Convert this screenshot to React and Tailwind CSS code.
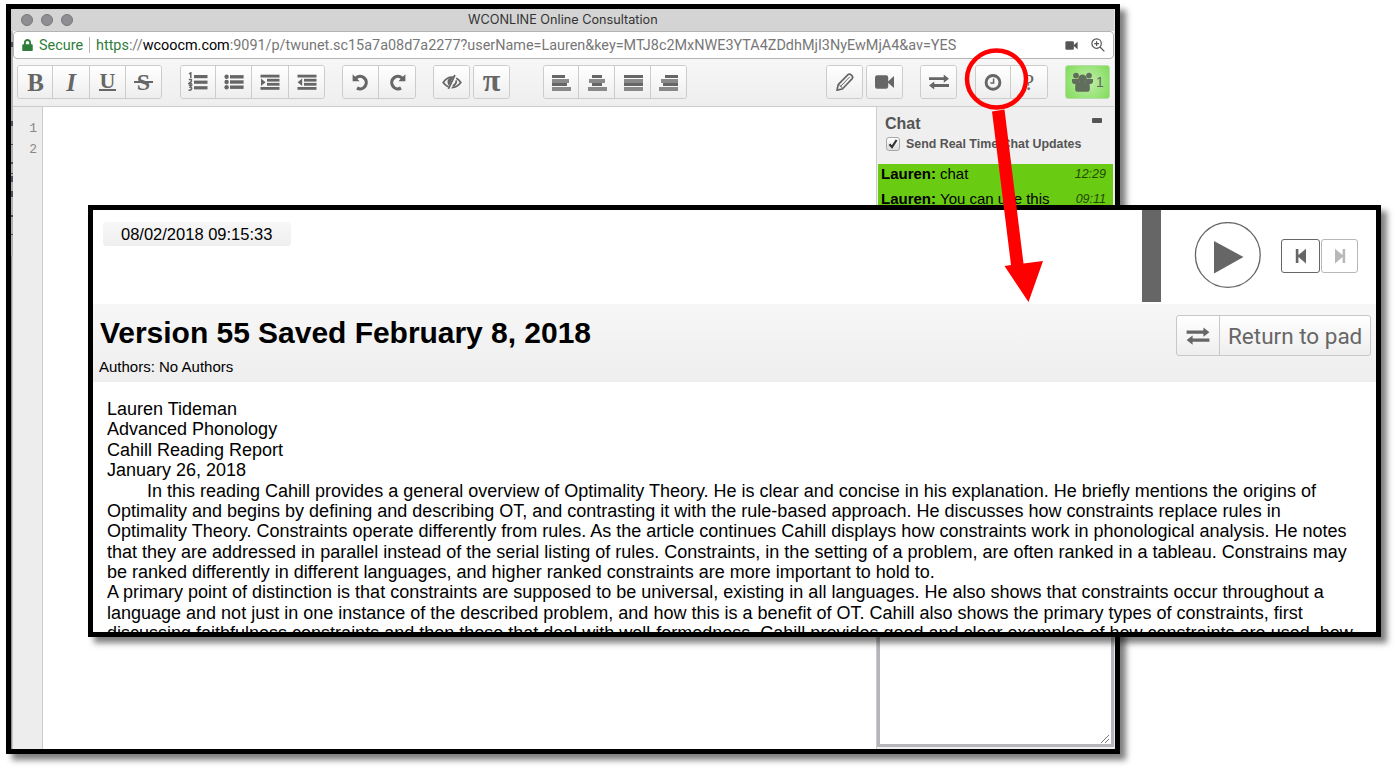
import React from "react";
import { FaLock } from "react-icons/fa";

const BTN = "flex items-center justify-center h-full bg-gradient-to-b from-white to-[#eeeeee] text-[#666666]";
const GLYPH = "font-['Liberation_Serif',serif] text-[25px] leading-none font-bold";
const GROUP = "flex h-[34px] shrink-0 overflow-hidden rounded-[3px] border border-[#cccccc] divide-x divide-[#cccccc]";

function Bars({ rows }) {
  return (
    <svg width="20" height="18" viewBox="0 0 20 18" fill="currentColor" shapeRendering="crispEdges">
      {rows.map(([x, w], i) => (
        <rect key={i} x={x} y={2 + i * 4} width={w} height={i % 2 ? 4 : 3} opacity={i % 2 ? 0.75 : 1} />
      ))}
    </svg>
  );
}

function ListOl() {
  return (
    <svg width="20" height="20" viewBox="0 0 20 20" fill="currentColor">
      <rect x="6" y="3" width="13.5" height="3.2" />
      <rect x="6" y="8.6" width="13.5" height="3.2" />
      <rect x="6" y="14.2" width="13.5" height="3.2" />
      <path d="M1 2l1.8-1.2V6M.8 7.6h2.6v1.6L1 11.4h3M.8 13.2h2.8L2.2 15c2.4 0 1.8 3.8-1.6 3" fill="none" stroke="currentColor" strokeWidth="1.5" />
    </svg>
  );
}

function ListUl() {
  return (
    <svg width="20" height="16" viewBox="0 0 20 16" fill="currentColor">
      {[2.8, 8, 13.2].map((y) => (
        <g key={y}>
          <circle cx="2.6" cy={y} r="2.2" />
          <rect x="6" y={y - 1.7} width="13.6" height="3.4" />
        </g>
      ))}
    </svg>
  );
}

function Indent({ out }) {
  return (
    <svg width="20" height="16" viewBox="0 0 20 16" fill="currentColor">
      <rect x="0.5" y="0.7" width="19" height="2.8" />
      <rect x="7" y="4.8" width="12.5" height="2.8" />
      <rect x="7" y="8.9" width="12.5" height="2.8" />
      <rect x="0.5" y="13" width="19" height="2.8" />
      {out ? <path d="M5.2 4.4v7.6L0.6 8.2z" /> : <path d="M1 4.4v7.6L5.6 8.2z" />}
    </svg>
  );
}

function Rotate({ flip }) {
  return (
    <svg width="18" height="18" viewBox="0 0 18 18" className={flip ? "-scale-x-100" : ""}>
      <path d="M3.6 5.3A6.2 6.2 0 1 1 5 15" fill="none" stroke="currentColor" strokeWidth="3.2" />
      <path d="M.6 1.2v7h7z" fill="currentColor" />
    </svg>
  );
}

function EyeSlash() {
  return (
    <svg width="20" height="16" viewBox="0 0 20 16" fill="none" stroke="currentColor">
      <path d="M1.2 8.5C3.6 5 6.6 3.2 10 3.2s6.4 1.8 8.8 5.3c-2.4 3.2-5.4 5-8.8 5s-6.4-1.8-8.8-5z" strokeWidth="1.8" />
      <path d="M10.8 3.8C7 3.4 5 6 5.6 9c.3 1.5 1.2 2.6 2.2 3.2z" fill="currentColor" stroke="none" />
      <path d="M13.8 1.2L7 15.2" stroke="#f7f7f7" strokeWidth="3.2" />
      <path d="M12.9 1L6.4 14.8M14.2 6.4c.4 2.4-1 4.4-3.4 5.4" strokeWidth="1.8" />
    </svg>
  );
}

function Exchange({ w = 20, h = 16 }) {
  return (
    <svg width={w} height={h} viewBox="0 0 19 15" fill="currentColor">
      <path d="M0 2.9h14V.4l5 3.9-5 3.8V5.7H0z" />
      <path d="M19 9.5H5V7l-5 3.9 5 3.8v-2.4h14z" />
    </svg>
  );
}

function Pencil() {
  return (
    <svg width="20" height="20" viewBox="0 0 20 20" fill="none" stroke="currentColor">
      <path d="M2 18.200l1.200-5.600L13 2.600c1.800-1.600 6 1.600 4.200 4L7.400 17z" strokeWidth="1.7" strokeLinejoin="round" />
      <path d="M5.400 14.600L14.800 4.800M3.200 12.800c1.800.2 3.600 1.800 4 3.800" strokeWidth="1" />
    </svg>
  );
}

function Camera({ w = 19, h = 14 }) {
  return (
    <svg width={w} height={h} viewBox="0 0 19 14" fill="currentColor">
      <rect x="0" y="0.2" width="13.2" height="13.6" rx="2.2" />
      <path d="M13 6.4L19 1v12L13 7.800z" />
    </svg>
  );
}

function Clock() {
  return (
    <svg width="18" height="18" viewBox="0 0 18 18" fill="none" stroke="currentColor">
      <circle cx="9" cy="9.4" r="6.900" strokeWidth="2.900" />
      <path d="M9.600 5.600v4.400H6.400" strokeWidth="1.500" />
    </svg>
  );
}

function Users() {
  return (
    <svg width="21" height="20" viewBox="0 0 21 20" fill="#626e5c">
      <circle cx="4" cy="3.600" r="2.900" />
      <circle cx="17" cy="3.600" r="2.900" />
      <path d="M0 7h7v5H2.400C1 12 0 11 0 9.600zM21 7h-7v5h4.600c1.400 0 2.400-1 2.400-2.400z" />
      <circle cx="10.500" cy="6.600" r="4.200" />
      <path d="M3.200 14c0-2.600 1.600-4.400 3.800-4.400h7c2.200 0 3.800 1.800 3.800 4.400v3.200c0 1.600-1 2.600-2.600 2.600H5.800c-1.600 0-2.600-1-2.600-2.600z" />
    </svg>
  );
}

function TitleBar() {
  return (
    <div className="flex h-[22px] shrink-0 items-center bg-[#d4d4d4] pl-2">
      <div className="flex gap-2">
        <span className="size-3 rounded-full border border-[#77777b] bg-[#8e8e93]" />
        <span className="size-3 rounded-full border border-[#77777b] bg-[#8e8e93]" />
        <span className="size-3 rounded-full border border-[#77777b] bg-[#8e8e93]" />
      </div>
      <span className="ml-[395px] pt-px whitespace-nowrap font-['Inter',sans-serif] text-[12.7px] leading-none text-[#333333]">WCONLINE Online Consultation</span>
    </div>
  );
}

function AddressBar() {
  return (
    <div className="flex h-7 shrink-0 items-center rounded-sm border border-[#b4b4b4] bg-white pr-2 pl-2 font-['Roboto',sans-serif] text-[14.4px] leading-none whitespace-nowrap">
      <FaLock className="h-3 w-[11px] text-[#2e7d3a]" />
      <span className="ml-[6px] pt-[2px] text-[#2e7d3a]">Secure</span>
      <span className="mr-[6px] ml-[6px] h-4 w-px bg-[#b8b8b8]" />
      <span className="pt-[2px] text-[#777777]">
        <span className="text-[#2e7d3a]">https</span>://<span className="text-black">wcoocm.com</span>:9091/p/twunet.sc15a7a08d7a2277?userName=Lauren&amp;key=MTJ8c2MxNWE3YTA4ZDdhMjI3NyEwMjA4&amp;av=YES
      </span>
      <div className="ml-auto flex items-center gap-[13px] text-[#555555]">
        <Camera w={13} h={9} />
        <svg width="14" height="14" viewBox="0 0 14 14" fill="none" stroke="currentColor" strokeWidth="1.2">
          <circle cx="5.6" cy="5.6" r="4.7" />
          <path d="M9 9l4.4 4.4M3.2 5.6H8M5.6 3.2V8" />
        </svg>
      </div>
    </div>
  );
}

function Toolbar() {
  return (
    <div className="flex h-[48px] shrink-0 items-start border-b border-[#cccccc] bg-gradient-to-b from-[#f7f7f7] to-[#eeeeee] pt-[6px] pl-1">
      <div className={GROUP}>
        <div className={`${BTN} ${GLYPH} w-[35px] pl-px`}>B</div>
        <div className={`${BTN} ${GLYPH} w-[37px] italic`}>I</div>
        <div className={`${BTN} w-[36px]`}>
          <span className="flex flex-col items-center font-['Liberation_Serif',serif] text-[22px] leading-[16px] font-bold">
            U
            <span className="h-[2px] w-[17px] bg-[#666666]" />
          </span>
        </div>
        <div className={`${BTN} relative w-[35px]`}>
          <span className="font-['Liberation_Serif',serif] text-[24px] leading-none font-bold">S</span>
          <span className="absolute h-[2px] w-[19px] bg-[#666666]" />
        </div>
      </div>
      <div className={`${GROUP} ml-[18px]`}>
        <div className={`${BTN} w-[35px]`}><ListOl /></div>
        <div className={`${BTN} w-[36px]`}><ListUl /></div>
        <div className={`${BTN} w-[37px]`}><Indent /></div>
        <div className={`${BTN} w-[35px]`}><Indent out /></div>
      </div>
      <div className={`${GROUP} ml-[17px]`}>
        <div className={`${BTN} w-[36px]`}><Rotate /></div>
        <div className={`${BTN} w-[36px]`}><Rotate flip /></div>
      </div>
      <div className={`${GROUP} ml-[17px]`}>
        <div className={`${BTN} w-[35px]`}><EyeSlash /></div>
      </div>
      <div className={`${GROUP} ml-[3px]`}>
        <div className={`${BTN} w-[35px] pb-1 font-['Liberation_Serif',serif] text-[32px] leading-none font-bold`}>π</div>
      </div>
      <div className={`${GROUP} ml-[33px]`}>
        <div className={`${BTN} w-[35px]`}><Bars rows={[[1, 13], [1, 17], [1, 15], [1, 19]]} /></div>
        <div className={`${BTN} w-[36px]`}><Bars rows={[[5, 10], [2, 16], [5, 10], [1, 19]]} /></div>
        <div className={`${BTN} w-[36px]`}><Bars rows={[[1, 19], [1, 19], [1, 19], [1, 19]]} /></div>
        <div className={`${BTN} w-[35px]`}><Bars rows={[[6, 13], [2, 17], [4, 15], [0, 19]]} /></div>
      </div>
      <div className={`${GROUP} ml-[139px]`}>
        <div className={`${BTN} w-[35px]`}><Pencil /></div>
      </div>
      <div className={`${GROUP} ml-[3px]`}>
        <div className={`${BTN} w-[35px]`}><Camera /></div>
      </div>
      <div className={`${GROUP} ml-[17px]`}>
        <div className={`${BTN} w-[35px]`}><Exchange /></div>
      </div>
      <div className={`${GROUP} ml-[18px]`}>
        <div className={`${BTN} w-[35px]`}><Clock /></div>
        <div className={`${BTN} w-[36px] font-['Liberation_Serif',serif] text-[23px] leading-none`}>?</div>
      </div>
      <div className="ml-[17px] flex h-[34px] w-[45px] shrink-0 items-center gap-[3px] rounded-[3px] border border-[#b9dba9] bg-[radial-gradient(circle,#b6eb9d_20%,#7fdc58_100%)] pl-[6px] font-['Liberation_Sans',sans-serif] text-sm leading-none text-[#666666]">
        <Users />
        <span>1</span>
      </div>
    </div>
  );
}

function ChatMessage({ text, time }) {
  return (
    <div className="flex h-[25px] items-start pt-[2px] pr-[7px] pl-[3px] text-[15px] leading-4 text-black">
      <b>Lauren:</b>
      <span className="ml-1">{text}</span>
      <i className="ml-auto text-[12.5px] text-[#234a00]">{time}</i>
    </div>
  );
}

function Chat() {
  return (
    <div className="flex w-[238px] shrink-0 flex-col border-l border-[#cccccc] bg-[#efefef] font-['Liberation_Sans',sans-serif] text-[#555555]">
      <div className="flex h-[57px] shrink-0 flex-col pt-2 pl-2">
        <div className="flex justify-between pr-3">
          <span className="text-base leading-[18px] font-bold">Chat</span>
          <span className="mt-[3px] h-[5px] w-[10px] rounded-[1px] bg-[#555555]" />
        </div>
        <div className="mt-[3px] flex items-center pl-px">
          <span className="flex size-[14px] items-center justify-center rounded-[3px] border border-[#a9a9a9] bg-gradient-to-b from-white to-[#dddddd]">
            <svg width="10" height="10" viewBox="0 0 10 10" fill="none" stroke="#333333" strokeWidth="2.2"><path d="M1.4 5.2L4 8l4.6-7" /></svg>
          </span>
          <span className="ml-[6px] pt-px text-[12.4px] leading-[15px] font-bold whitespace-nowrap">Send Real Time Chat Updates</span>
        </div>
      </div>
      <div className="mr-px ml-px flex h-[270px] shrink-0 flex-col overflow-hidden bg-[#6acb13]">
        <ChatMessage text="chat" time="12:29" />
        <ChatMessage text="You can use this" time="09:11" />
      </div>
      <div className="relative mb-[2px] flex-1 border-x-[3px] border-b-[3px] border-[#b5b5bb] bg-white">
        <svg className="absolute right-[2px] bottom-px" width="8" height="8" viewBox="0 0 8 8" stroke="#777777"><path d="M0 8l8-8M4 8l4-4" /></svg>
      </div>
    </div>
  );
}

function EdgeStrip() {
  return (
    <svg className="shrink-0" width="2" height="740" viewBox="0 0 2 740" shapeRendering="crispEdges">
      <rect width="2" height="22" fill="#d0d0d0" />
      <rect y="22" width="2" height="225" fill="#b0b0b0" />
      <rect y="247" width="2" height="493" fill="#8f8f93" />
      {[[33, 5], [112, 5], [135, 1], [153, 2], [164, 1], [167, 6], [182, 6], [206, 2], [225, 1]].map(([y, h]) => (
        <rect key={y} x="0" y={y} width="2" height={h} fill="#2a2a3a" opacity="0.7" />
      ))}
      <rect x="1" y="247" width="1" height="493" fill="#c8c8c8" />
    </svg>
  );
}

function PadWindow() {
  return (
    <div className="ml-[6px] flex h-[750px] w-[1114px] border-[5px] border-black bg-[#e6e6e6] shadow-[6px_6px_6px_rgba(0,0,0,0.5)]">
      <EdgeStrip />
      <div className="mr-px flex min-w-0 flex-1 flex-col bg-white">
        <TitleBar />
        <AddressBar />
        <Toolbar />
        <div className="flex min-h-0 flex-1">
          <div className="flex w-[30px] shrink-0 flex-col items-end border-r border-[#cccccc] bg-[#ededed] pt-[11px] pr-[5px] font-['Liberation_Mono',monospace] text-[13px] leading-[21px] text-[#888888]">
            <span>1</span>
            <span>2</span>
          </div>
          <div className="flex-1" />
          <Chat />
        </div>
      </div>
    </div>
  );
}

const LINES = [
  "Lauren Tideman",
  "Advanced Phonology",
  "Cahill Reading Report",
  "January 26, 2018",
  "In this reading Cahill provides a general overview of Optimality Theory. He is clear and concise in his explanation. He briefly mentions the origins of",
  "Optimality and begins by defining and describing OT, and contrasting it with the rule-based approach. He discusses how constraints replace rules in",
  "Optimality Theory. Constraints operate differently from rules. As the article continues Cahill displays how constraints work in phonological analysis. He notes",
  "that they are addressed in parallel instead of the serial listing of rules. Constraints, in the setting of a problem, are often ranked in a tableau. Constrains may",
  "be ranked differently in different languages, and higher ranked constraints are more important to hold to.",
  "A primary point of distinction is that constraints are supposed to be universal, existing in all languages. He also shows that constraints occur throughout a",
  "language and not just in one instance of the described problem, and how this is a benefit of OT. Cahill also shows the primary types of constraints, first",
  "discussing faithfulness constraints and then those that deal with well-formedness. Cahill provides good and clear examples of how constraints are used, how",
];

function VersionPanel() {
  return (
    <div className="absolute top-[205px] left-[88px] flex h-[432px] w-[1293px] flex-col overflow-hidden border-[5px] border-black bg-white font-['Liberation_Sans',sans-serif] text-black shadow-[6px_6px_6px_rgba(0,0,0,0.5)]">
      <div className="flex h-[94px] shrink-0 items-start">
        <div className="mt-3 ml-[10px] flex h-6 w-[188px] items-center rounded-[3px] bg-gradient-to-b from-[#f7f7f7] to-[#efefef] pt-px pl-[18px] text-[16.5px] leading-none">08/02/2018 09:15:33</div>
        <div className="ml-[851px] h-[92px] w-[19px] bg-[#666666]" />
        <svg className="mt-3 ml-[33px]" width="67" height="67" viewBox="0 0 67 67">
          <circle cx="33.800" cy="33" r="32.400" fill="white" stroke="#666666" strokeWidth="1.300" />
          <path d="M20 19v32.500L49.500 35z" fill="#666666" />
        </svg>
        <div className="mt-[29px] ml-5 flex h-[34px] w-[39px] items-center justify-center rounded-[3px] border border-[#666666] text-[#666666]">
          <svg width="12" height="16" viewBox="0 0 12 16" fill="currentColor"><path d="M.8 1h2.6v6L11 .8v14.600L3.400 9v6H.8z" /></svg>
        </div>
        <div className="mt-[29px] ml-px flex h-[34px] w-[37px] items-center justify-center rounded-[3px] border border-[#b8b8b8] text-[#b8b8b8]">
          <svg width="12" height="16" viewBox="0 0 12 16" fill="currentColor"><path d="M11.200 1H8.600v6L1 .8v14.600L8.600 9v6h2.600z" /></svg>
        </div>
      </div>
      <div className="flex h-[78px] shrink-0 items-start justify-between bg-gradient-to-b from-[#f7f7f7] to-[#eeeeee] pr-[5px] pl-[6px]">
        <div className="flex flex-col items-start whitespace-nowrap">
          <h1 className="mt-3 pl-px text-[30px] leading-[34px] font-bold tracking-[-0.03px]">Version 55 Saved February 8, 2018</h1>
          <span className="mt-[8px] text-[15px] leading-[18px]">Authors: No Authors</span>
        </div>
        <div className="mt-[11px] flex h-[41px] w-[195px] rounded-[3px] border border-[#c8c8c8] bg-gradient-to-b from-white to-[#eeeeee] text-[#666666]">
          <div className="flex w-[43px] items-center justify-center border-r border-[#c8c8c8]"><Exchange w={24} h={18} /></div>
          <span className="pl-2 font-['Roboto',sans-serif] text-[22.5px] leading-10 whitespace-nowrap">Return to pad</span>
        </div>
      </div>
      <div className="flex flex-col items-start pt-[17px] pl-[14px] text-[18px] leading-[20.37px] whitespace-nowrap">
        {LINES.map((line, i) => (
          <span key={i} className={i === 4 ? "pl-10" : ""}>{line}</span>
        ))}
      </div>
    </div>
  );
}

export default function App() {
  return (
    <div className="relative h-[768px] w-[1395px] overflow-hidden bg-white pt-1">
      <PadWindow />
      <VersionPanel />
      <svg className="absolute top-0 left-0" width="1395" height="768" viewBox="0 0 1395 768">
        <ellipse cx="996.5" cy="79" rx="29.5" ry="28.5" fill="none" stroke="#ff0000" strokeWidth="4.5" />
        <path d="M992 111.5L1004.5 109.5L1023.5 263.5L1043 261L1028.5 302L1004.5 266L1011 265z" fill="#ff0000" />
      </svg>
    </div>
  );
}
